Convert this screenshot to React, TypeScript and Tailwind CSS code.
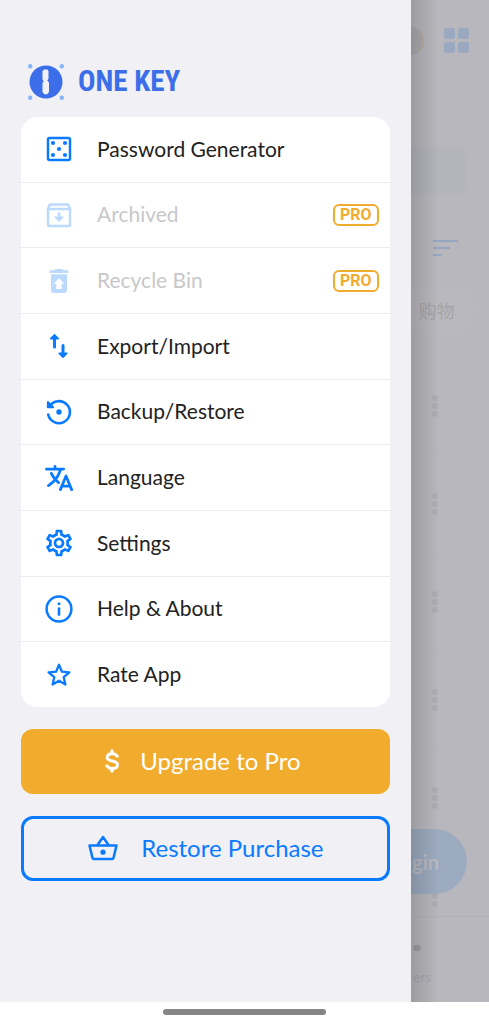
import type { ReactNode } from 'react';
import cn from 'clsx';
import { IoLanguage } from 'react-icons/io5';
import { MdOutlineSettings, MdRestoreFromTrash } from 'react-icons/md';

const stroke = {
  fill: 'none',
  stroke: 'currentColor',
  strokeLinecap: 'round',
  strokeLinejoin: 'round',
} as const;

const Logo = () => (
  <svg viewBox="0 0 36 36" className="size-9">
    <circle cx="18" cy="18" r="16.5" fill="#3b6ee8" />
    <g fill="#86b5f6">
      <circle cx="2.2" cy="2.2" r="2.2" />
      <circle cx="33.8" cy="2.2" r="2.2" />
      <circle cx="2.2" cy="33.8" r="2.2" />
      <circle cx="33.8" cy="33.8" r="2.2" />
    </g>
    <path
      fill="#f0f0f5"
      d="M16 5.5h3.5l1 1.5v7.500l-1.200 2 1.700 2V28l-1.800 2.200h-3L14.500 28V19l1.200-1.700-1.200-1.800V7z"
    />
  </svg>
);

const DiceIcon = () => (
  <svg viewBox="0 0 28 28" className="size-7">
    <rect x="3" y="3" width="22" height="22" rx="1.5" {...stroke} strokeWidth="2.5" />
    <g fill="currentColor">
      <circle cx="8" cy="8" r="2.1" />
      <circle cx="20" cy="8" r="2.1" />
      <circle cx="14" cy="14" r="2.1" />
      <circle cx="8" cy="20" r="2.1" />
      <circle cx="20" cy="20" r="2.1" />
    </g>
  </svg>
);

const ArchiveIcon = () => (
  <svg viewBox="0 0 28 28" className="size-7">
    <path {...stroke} strokeWidth="2.5" d="M3 7.500V24q0 1 1 1h20q1 0 1-1V7.500L23 3.500H5zM3 8h22" />
    <path
      fill="currentColor"
      d="M12.700 11.500h2.600v4h3q.9.200.2 1l-4 4q-.5.400-1 0l-4-4q-.7-.8.200-1h3z"
    />
  </svg>
);

const ArrowsIcon = () => (
  <svg viewBox="0 0 24 30" className="h-[30px] w-6">
    <g {...stroke} strokeWidth="3">
      <path d="M7.500 16V6M16 14.500v10" />
    </g>
    <path
      fill="currentColor"
      d="M7.500 2.800 12 7.300q.4 1.200-.8 1.200H3.800Q2.600 8.500 3 7.300zM16 27.200l4.500-4.500q.4-1.200-.8-1.200h-7.400q-1.200 0-.8 1.200z"
    />
  </svg>
);

const RestoreIcon = () => (
  <svg viewBox="0 0 28 28" className="size-7">
    <path {...stroke} strokeWidth="2.6" d="M4.500 8.500A11 11 0 1 1 3.200 16.500" />
    <path fill="currentColor" d="M2 3.500q1-.8 1.800 0L9 8.700q.6 1.300-.8 1.500H3q-1.200 0-1.200-1.200z" />
    <circle cx="14" cy="14" r="2.7" fill="currentColor" />
  </svg>
);

const InfoIcon = () => (
  <svg viewBox="0 0 28 28" className="size-7">
    <circle cx="14" cy="14" r="12.4" {...stroke} strokeWidth="2.5" />
    <path d="M14 13.600v6" {...stroke} strokeWidth="2.6" />
    <circle cx="14" cy="8.8" r="1.5" fill="currentColor" />
  </svg>
);

const StarIcon = () => (
  <svg viewBox="0 0 28 28" className="size-7">
    <path
      {...stroke}
      strokeWidth="2.3"
      d="m14 3.700 2.900 7 7.500.6-5.700 4.900 1.700 7.300L14 19.700l-6.400 3.800 1.700-7.300-5.700-4.900 7.500-.6z"
    />
  </svg>
);

const DollarIcon = () => (
  <svg viewBox="0 0 24 28" className="h-7 w-6">
    <path
      {...stroke}
      strokeWidth="3"
      strokeLinecap="butt"
      d="M17.700 10.300C17 7.800 14.800 6.700 12.200 6.700c-3 0-5 1.400-5 3.700 0 5 10.300 2.200 10.300 7.300 0 2.400-2.200 3.800-5.300 3.800-3 0-5-1.300-5.700-3.900"
    />
    <path {...stroke} strokeWidth="3.4" d="M12 4v2M12 22v2" />
  </svg>
);

const BasketIcon = () => (
  <svg viewBox="0 0 32 28" className="h-7 w-8">
    <path {...stroke} strokeWidth="2.5" d="M2.500 11.500h27l-3 12.500q-.3 1-1.300 1H6.800q-1 0-1.300-1zM10.500 11 16 3l5.500 8" />
    <circle cx="16" cy="18.2" r="2.6" fill="currentColor" />
  </svg>
);

const items: { label: string; icon: ReactNode; pro?: boolean }[] = [
  { label: 'Password Generator', icon: <DiceIcon /> },
  { label: 'Archived', icon: <ArchiveIcon />, pro: true },
  { label: 'Recycle Bin', icon: <MdRestoreFromTrash className="size-8" />, pro: true },
  { label: 'Export/Import', icon: <ArrowsIcon /> },
  { label: 'Backup/Restore', icon: <RestoreIcon /> },
  { label: 'Language', icon: <IoLanguage className="size-8" /> },
  { label: 'Settings', icon: <MdOutlineSettings className="size-8" /> },
  { label: 'Help & About', icon: <InfoIcon /> },
  { label: 'Rate App', icon: <StarIcon /> },
];

const MenuItem = ({ label, icon, pro }: { label: string; icon: ReactNode; pro?: boolean }) => (
  <li className="flex flex-1">
    <button className="flex w-full items-center pr-[11px] pl-[22px] text-left" disabled={pro}>
      <span
        className={cn('flex w-8 shrink-0 justify-center', pro ? 'text-[#bcd9ff]' : 'text-[#0a7aff]')}
      >
        {icon}
      </span>
      <span
        className={cn('ml-[22px] grow pb-0.5 text-[21px]', pro ? 'text-[#c8c8ca]' : 'text-[#222]')}
      >
        {label}
      </span>
      {pro && (
        <span className="flex h-[22px] w-[46px] items-center justify-center rounded-md border-2 border-[#f1ac2d] font-['Roboto'] text-base font-bold text-[#f1ac2d]">
          PRO
        </span>
      )}
    </button>
  </li>
);

const Drawer = () => (
  <aside className="w-[84%] shrink-0 bg-[#f0f0f5] px-[21px] pt-16">
    <div className="flex h-9 items-center gap-3.5 pl-[7px]">
      <Logo />
      <h1 className="font-['Roboto_Condensed','Liberation_Sans_Narrow','Roboto',sans-serif] text-[29px] font-bold whitespace-nowrap text-[#3b6ee8]">
        ONE KEY
      </h1>
    </div>
    <ul className="mt-[17px] flex min-h-[590px] flex-col divide-y divide-[#ececee] rounded-2xl bg-white">
      {items.map((item) => (
        <MenuItem key={item.label} {...item} />
      ))}
    </ul>
    <button className="mt-[22px] flex h-[65px] w-full items-center justify-center gap-4 rounded-xl bg-[#f1ac2d] pr-2.5 pb-0.5 text-2xl text-white">
      <DollarIcon />
      Upgrade to Pro
    </button>
    <button className="mt-[22px] flex h-[65px] w-full items-center justify-center gap-[22px] rounded-xl border-[3px] border-[#0a7aff] pb-0.5 text-2xl text-[#0a7aff]">
      <BasketIcon />
      Restore Purchase
    </button>
  </aside>
);

const Dots = () => (
  <div className="flex flex-col gap-[2px]">
    <i className="size-1.5 rounded-full bg-[#adadb3]" />
    <i className="size-1.5 rounded-full bg-[#adadb3]" />
    <i className="size-1.5 rounded-full bg-[#adadb3]" />
  </div>
);

// The vault list, dimmed behind the open drawer
const Backdrop = () => (
  <main className="relative flex min-w-0 grow flex-col overflow-hidden bg-[#b8b7bd]">
    <div className="flex items-center pt-[27px]">
      <span className="h-7 w-[13px] rounded-r-full border-r-2 border-dotted border-[#c0b294] bg-[#adadb1]" />
      <svg viewBox="0 0 26 26" className="ml-5 size-[26px]" fill="#9ba9c0">
        <rect width="11" height="11" rx="2.5" />
        <rect x="14" width="11" height="11" rx="2.5" />
        <rect y="14" width="11" height="11" rx="2.5" />
        <rect x="14" y="14" width="11" height="11" rx="2.5" />
      </svg>
    </div>
    <div className="mt-[92px] mr-[22px] h-12 rounded-r-lg bg-[#b3b5ba]" />
    <svg viewBox="0 0 26 18" className="mt-11 ml-[22px] h-[18px] w-[26px]" stroke="#97a6c0" strokeWidth="2">
      <path d="M0 2h25M0 9h17M0 16h9" />
    </svg>
    <div className="mt-[30px] mr-[14px] flex h-[46px] items-center rounded-r-2xl bg-[#b9b8be] pl-2 text-lg text-[#a4a4a9]">
      <span className="font-['Noto_Sans_CJK_SC',sans-serif]">购物</span>
    </div>
    <ul className="mt-6 mr-[22px] grow">
      {[0, 1, 2, 3, 4, 5].map((row) => (
        <li key={row} className="flex h-[98px] items-center border-b border-[#b5b5ba] pl-[21px]">
          <Dots />
        </li>
      ))}
    </ul>
    <nav className="absolute inset-x-0 bottom-0 flex h-[86px] flex-col border-t border-[#b1b1b6] bg-[#b8b7bd] pt-7 pl-0.5 text-sm text-[#a7a7ac]">
      <i className="h-1.5 w-2 rounded-full bg-[#a0a0a4]" />
      <span className="mt-4">ers</span>
    </nav>
    <button className="absolute right-[22px] bottom-[108px] left-0 flex h-[65px] items-center justify-end rounded-r-full bg-[#9dabc0] pr-7 text-xl font-bold text-[#b9bbc3]">
      gin
    </button>
    <div className="absolute inset-y-0 left-0 w-7 bg-gradient-to-r from-black/15 to-transparent" />
  </main>
);

export default function App() {
  return (
    <div className="flex min-h-screen flex-col bg-white font-['Lato','Roboto',sans-serif]">
      <div className="flex grow">
        <Drawer />
        <Backdrop />
      </div>
      <footer className="flex h-[22px] items-center justify-center pb-0.5">
        <span className="h-1.5 w-1/3 rounded-full bg-[#858585]" />
      </footer>
    </div>
  );
}
